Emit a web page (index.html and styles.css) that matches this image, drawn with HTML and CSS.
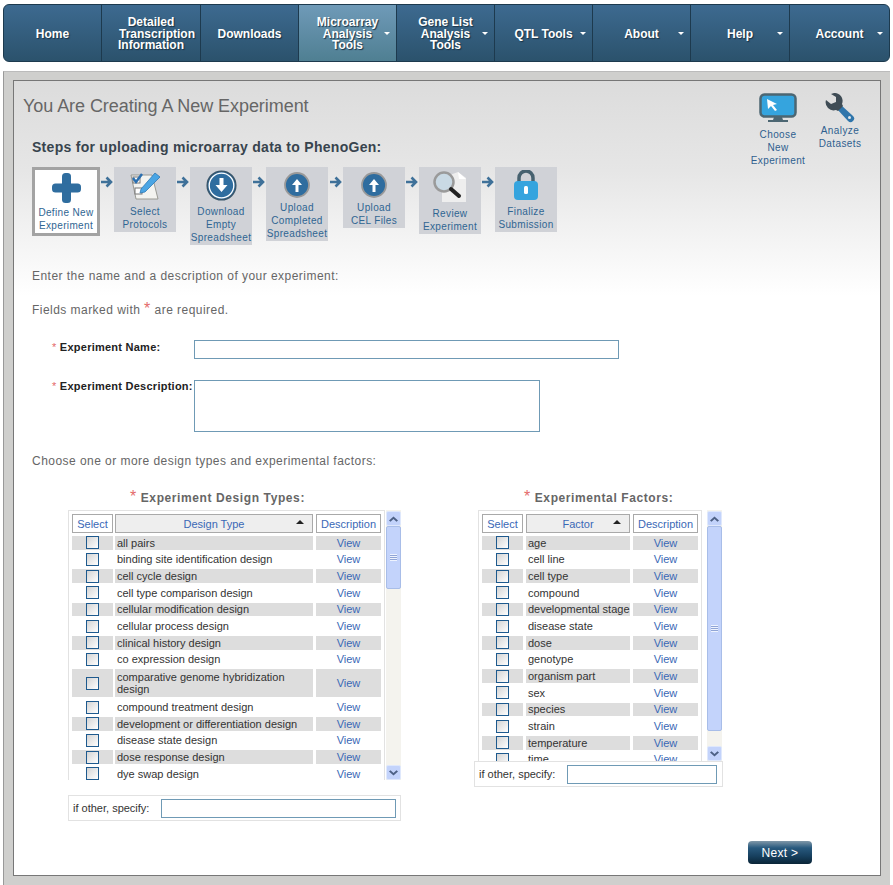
FILE: index.html
```html
<!DOCTYPE html>
<html lang="en">
<head>
  <meta charset="UTF-8" />
  <title>PhenoGen - Create Experiment</title>
  <link rel="stylesheet" href="styles.css">
</head>
<body>
  <nav class="menu">
    <a class="menu-item">Home</a>
    <a class="menu-item"><span>Detailed<br><span class="wide-line">Transcription</span><br>Information</span></a>
    <a class="menu-item">Downloads</a>
    <a class="menu-item has-sub active">Microarray<br>Analysis<br>Tools</a>
    <a class="menu-item has-sub">Gene List<br>Analysis<br>Tools</a>
    <a class="menu-item has-sub">QTL Tools</a>
    <a class="menu-item has-sub">About</a>
    <a class="menu-item has-sub">Help</a>
    <a class="menu-item has-sub">Account</a>
  </nav>

  <div class="page">
    <div class="panel">
      <div class="head">
        <div class="head-left">
          <h1>You Are Creating A New Experiment</h1>
          <h2>Steps for uploading microarray data to PhenoGen:</h2>
        </div>
        <div class="quick-links">
          <a class="quick-link choose">
            <svg width="38" height="30" viewBox="0 0 38 30">
              <rect x="1.500" y="1.500" width="35" height="22" rx="4" fill="#35a4de" stroke="#4c6672" stroke-width="2.500"/>
              <path d="M8 6l10 5-4 1 4 5-2 1-4-5-3 3z" fill="#fff"/>
              <path d="M15 24h8l1 3h5v2H9v-2h5z" fill="#4c6672"/>
            </svg>
            Choose<br>New<br>Experiment
          </a>
          <a class="quick-link analyze">
            <svg width="30" height="30" viewBox="0 0 30 30">
              <path d="M16 12l12 11a3.500 3.500 0 0 1-5 5L12 16z" fill="#2f75ab"/>
              <circle cx="24.500" cy="24.500" r="1.500" fill="#dfe6ea"/>
              <path d="M9 0a8 8 0 0 1 8 11l1 2-5 5-2-1A8 8 0 0 1 1 7l5 4 5-2 0-5-5-3z" fill="#3f4c55"/>
            </svg>
            Analyze<br>Datasets
          </a>
        </div>
      </div>

      <div class="steps">
        <div class="step current">
          <svg width="29" height="30" viewBox="0 0 29 30"><rect x="10" y="0" width="9" height="30" rx="3.500" fill="#2f6d9f"/><rect x="0" y="10.500" width="29" height="9" rx="3.500" fill="#2f6d9f"/></svg>
          <span>Define New<br>Experiment</span>
        </div>
        <svg class="step-arrow" width="12" height="12" viewBox="0 0 12 12"><path d="M0 6h9.500M5.500 1.500L10 6l-4.500 4.500" fill="none" stroke="#3f7199" stroke-width="2.600"/></svg>
        <div class="step protocols">
          <svg width="32" height="33" viewBox="0 0 32 33">
            <path d="M2 5h21l6 24H7z" fill="#f3f3f0" stroke="#9a9a94"/>
            <rect x="4" y="7" width="7" height="6" fill="#fff" stroke="#777"/>
            <rect x="6" y="18" width="7" height="6" fill="#fff" stroke="#777"/>
            <path d="M4 8l3 4 6-8" fill="none" stroke="#2a6fb0" stroke-width="2.500"/>
            <path d="M12 19L26 3l5 4-15 15-5 1z" fill="#4aa5e4" stroke="#2f78b5" stroke-width=".8"/>
          </svg>
          <span>Select<br>Protocols</span>
        </div>
        <svg class="step-arrow" width="12" height="12" viewBox="0 0 12 12"><path d="M0 6h9.500M5.500 1.500L10 6l-4.500 4.500" fill="none" stroke="#3f7199" stroke-width="2.600"/></svg>
        <div class="step">
          <svg width="31" height="31" viewBox="0 0 31 31">
            <circle cx="15.500" cy="15.500" r="14.300" fill="#2f6d9f" stroke="#39566b" stroke-width="1.500"/>
            <circle cx="15.500" cy="15.500" r="12.300" fill="none" stroke="#fff" stroke-width="1.300"/>
            <path d="M13.500 8h4v7h4l-6 7-6-7h4z" fill="#fff"/>
          </svg>
          <span>Download<br>Empty<br>Spreadsheet</span>
        </div>
        <svg class="step-arrow" width="12" height="12" viewBox="0 0 12 12"><path d="M0 6h9.500M5.500 1.500L10 6l-4.500 4.500" fill="none" stroke="#3f7199" stroke-width="2.600"/></svg>
        <div class="step upload">
          <svg width="26" height="26" viewBox="0 0 26 26">
            <circle cx="13" cy="13" r="12" fill="#2f6d9f" stroke="#999" stroke-width="1.800"/>
            <path d="M11.500 20v-7H8l5-6 5 6h-3.500v7z" fill="#fff"/>
          </svg>
          <span>Upload<br>Completed<br>Spreadsheet</span>
        </div>
        <svg class="step-arrow wider" width="12" height="12" viewBox="0 0 12 12"><path d="M0 6h9.500M5.500 1.500L10 6l-4.500 4.500" fill="none" stroke="#3f7199" stroke-width="2.600"/></svg>
        <div class="step upload">
          <svg width="26" height="26" viewBox="0 0 26 26">
            <circle cx="13" cy="13" r="12" fill="#2f6d9f" stroke="#999" stroke-width="1.800"/>
            <path d="M11.500 20v-7H8l5-6 5 6h-3.500v7z" fill="#fff"/>
          </svg>
          <span>Upload<br>CEL Files</span>
        </div>
        <svg class="step-arrow" width="12" height="12" viewBox="0 0 12 12"><path d="M0 6h9.500M5.500 1.500L10 6l-4.500 4.500" fill="none" stroke="#3f7199" stroke-width="2.600"/></svg>
        <div class="step review">
          <svg width="36" height="34" viewBox="0 0 36 34">
            <path d="M10 8l16-6 8 6v24H10z" fill="#eeeeee"/>
            <path d="M26 2l1 7h7z" fill="#fff"/>
            <circle cx="12" cy="12" r="9.500" fill="#c9d9e4" stroke="#9a9a9a" stroke-width="2.500"/>
            <path d="M19 19l8 7" stroke="#222" stroke-width="4" stroke-linecap="round"/>
          </svg>
          <span>Review<br>Experiment</span>
        </div>
        <svg class="step-arrow" width="12" height="12" viewBox="0 0 12 12"><path d="M0 6h9.500M5.500 1.500L10 6l-4.500 4.500" fill="none" stroke="#3f7199" stroke-width="2.600"/></svg>
        <div class="step lock">
          <svg width="26" height="31" viewBox="0 0 26 31">
            <path d="M6 13V8a7 7 0 0 1 14 0v5" fill="none" stroke="#46616f" stroke-width="3.500"/>
            <rect x="1" y="11" width="24" height="19" rx="4" fill="#35a4de"/>
            <rect x="11" y="16" width="4" height="8" rx="1.500" fill="#fff"/>
          </svg>
          <span>Finalize<br>Submission</span>
        </div>
      </div>

      <p class="intro first">Enter the name and a description of your experiment:</p>
      <p class="intro required-note">Fields marked with <span class="star big">*</span> are required.</p>

      <div class="field name-field">
        <label class="field-label"><span class="star">*</span> Experiment Name:</label>
        <input class="text-input name-input" type="text">
      </div>
      <div class="field desc-field">
        <label class="field-label"><span class="star">*</span> Experiment Description:</label>
        <textarea class="text-input desc-input"></textarea>
      </div>

      <p class="intro choose-note">Choose one or more design types and experimental factors:</p>

      <div class="lists">
        <section class="list-col design-col">
          <h3><span class="star big">*</span> Experiment Design Types:</h3>
          <div class="list-wrap">
            <div class="list-box">
              <div class="row head-row">
                <div class="c-sel th">Select</div>
                <div class="c-name th sorted">Design Type<i class="sort-arrow"></i></div>
                <div class="c-view th">Description</div>
              </div>
              <div class="row odd"><div class="c-sel"><i class="check"></i></div><div class="c-name">all pairs</div><div class="c-view">View</div></div>
              <div class="row"><div class="c-sel"><i class="check"></i></div><div class="c-name">binding site identification design</div><div class="c-view">View</div></div>
              <div class="row odd"><div class="c-sel"><i class="check"></i></div><div class="c-name">cell cycle design</div><div class="c-view">View</div></div>
              <div class="row"><div class="c-sel"><i class="check"></i></div><div class="c-name">cell type comparison design</div><div class="c-view">View</div></div>
              <div class="row odd"><div class="c-sel"><i class="check"></i></div><div class="c-name">cellular modification design</div><div class="c-view">View</div></div>
              <div class="row"><div class="c-sel"><i class="check"></i></div><div class="c-name">cellular process design</div><div class="c-view">View</div></div>
              <div class="row odd"><div class="c-sel"><i class="check"></i></div><div class="c-name">clinical history design</div><div class="c-view">View</div></div>
              <div class="row"><div class="c-sel"><i class="check"></i></div><div class="c-name">co expression design</div><div class="c-view">View</div></div>
              <div class="row odd tall"><div class="c-sel"><i class="check"></i></div><div class="c-name">comparative genome hybridization design</div><div class="c-view">View</div></div>
              <div class="row"><div class="c-sel"><i class="check"></i></div><div class="c-name">compound treatment design</div><div class="c-view">View</div></div>
              <div class="row odd"><div class="c-sel"><i class="check"></i></div><div class="c-name">development or differentiation design</div><div class="c-view">View</div></div>
              <div class="row"><div class="c-sel"><i class="check"></i></div><div class="c-name">disease state design</div><div class="c-view">View</div></div>
              <div class="row odd"><div class="c-sel"><i class="check"></i></div><div class="c-name">dose response design</div><div class="c-view">View</div></div>
              <div class="row"><div class="c-sel"><i class="check"></i></div><div class="c-name">dye swap design</div><div class="c-view">View</div></div>
            </div>
            <div class="scrollbar">
              <div class="sb-btn up"><svg width="9" height="6" viewBox="0 0 9 6"><path d="M0 4.500l4.500-4 4.500 4-1.500 1.200-3-2.600-3 2.600z" fill="#4d6185"/></svg></div>
              <div class="sb-thumb"><i></i></div>
              <div class="sb-track"></div>
              <div class="sb-btn down"><svg width="9" height="6" viewBox="0 0 9 6"><path d="M0 1.500l4.500 4 4.500-4L7.500.3l-3 2.600-3-2.600z" fill="#4d6185"/></svg></div>
            </div>
          </div>
          <div class="other-box">
            <label>if other, specify:</label>
            <input class="text-input other-input" type="text">
          </div>
        </section>

        <section class="list-col factor-col">
          <h3><span class="star big">*</span> Experimental Factors:</h3>
          <div class="list-wrap">
            <div class="list-box">
              <div class="row head-row">
                <div class="c-sel th">Select</div>
                <div class="c-name th sorted">Factor<i class="sort-arrow"></i></div>
                <div class="c-view th">Description</div>
              </div>
              <div class="row odd"><div class="c-sel"><i class="check"></i></div><div class="c-name">age</div><div class="c-view">View</div></div>
              <div class="row"><div class="c-sel"><i class="check"></i></div><div class="c-name">cell line</div><div class="c-view">View</div></div>
              <div class="row odd"><div class="c-sel"><i class="check"></i></div><div class="c-name">cell type</div><div class="c-view">View</div></div>
              <div class="row"><div class="c-sel"><i class="check"></i></div><div class="c-name">compound</div><div class="c-view">View</div></div>
              <div class="row odd"><div class="c-sel"><i class="check"></i></div><div class="c-name">developmental stage</div><div class="c-view">View</div></div>
              <div class="row"><div class="c-sel"><i class="check"></i></div><div class="c-name">disease state</div><div class="c-view">View</div></div>
              <div class="row odd"><div class="c-sel"><i class="check"></i></div><div class="c-name">dose</div><div class="c-view">View</div></div>
              <div class="row"><div class="c-sel"><i class="check"></i></div><div class="c-name">genotype</div><div class="c-view">View</div></div>
              <div class="row odd"><div class="c-sel"><i class="check"></i></div><div class="c-name">organism part</div><div class="c-view">View</div></div>
              <div class="row"><div class="c-sel"><i class="check"></i></div><div class="c-name">sex</div><div class="c-view">View</div></div>
              <div class="row odd"><div class="c-sel"><i class="check"></i></div><div class="c-name">species</div><div class="c-view">View</div></div>
              <div class="row"><div class="c-sel"><i class="check"></i></div><div class="c-name">strain</div><div class="c-view">View</div></div>
              <div class="row odd"><div class="c-sel"><i class="check"></i></div><div class="c-name">temperature</div><div class="c-view">View</div></div>
              <div class="row"><div class="c-sel"><i class="check"></i></div><div class="c-name">time</div><div class="c-view">View</div></div>
            </div>
            <div class="scrollbar">
              <div class="sb-btn up"><svg width="9" height="6" viewBox="0 0 9 6"><path d="M0 4.500l4.500-4 4.500 4-1.500 1.200-3-2.600-3 2.600z" fill="#4d6185"/></svg></div>
              <div class="sb-thumb"><i></i></div>
              <div class="sb-track"></div>
              <div class="sb-btn down"><svg width="9" height="6" viewBox="0 0 9 6"><path d="M0 1.500l4.500 4 4.500-4L7.500.3l-3 2.600-3-2.600z" fill="#4d6185"/></svg></div>
            </div>
          </div>
          <div class="other-box">
            <label>if other, specify:</label>
            <input class="text-input other-input" type="text">
          </div>
        </section>
      </div>

      <div class="actions">
        <button class="next-btn">Next &gt;</button>
      </div>
    </div>
  </div>
</body>
</html>
```

FILE: styles.css
```css
html, body {
  margin: 0;
  padding: 0;
  height: 885px;
  overflow: hidden;
  background: #fff;
  font-family: "Liberation Sans", Arial, sans-serif;
  color: #333;
}

/* top menu */
.menu {
  display: flex;
  height: 58px;
  margin: 4px 3px 0 3px;
  background: linear-gradient(#3d6a90, #2b526c);
  border: 1px solid #1d3a4e;
  border-radius: 6px;
  box-sizing: border-box;
  overflow: hidden;
}

.menu-item {
  position: relative;
  flex: 0 0 98px;
  box-sizing: border-box;
  display: flex;
  align-items: center;
  justify-content: center;
  text-align: center;
  color: #fff;
  font-size: 12px;
  font-weight: bold;
  line-height: 11.500px;
  padding-top: 3px;
  border-right: 1px solid #1d3a4e;
  text-shadow: 1px 1px 1px #1b3346;
}

.menu-item:nth-child(2) { flex-basis: 99px; }
.menu-item:nth-child(8) { flex-basis: 99px; }
.menu-item:last-child { flex: 1; border-right: none; }

.wide-line {
  display: inline-block;
  padding-left: 12px;
}

.menu-item.active {
  background: linear-gradient(#6f9ab8, #4f7f92);
}

.has-sub::after {
  content: "";
  position: absolute;
  right: 6px;
  top: 27px;
  border-left: 3.500px solid transparent;
  border-right: 3.500px solid transparent;
  border-top: 3px solid #fff;
}

/* content frame */
.page {
  margin: 9px 3px 0 3px;
  height: 820px;
  box-sizing: border-box;
  background: #cfcfcd;
  border-left: 1px solid #999;
  border-top: 1px solid #bbb;
  padding: 8px 9px 0 9px;
}

.panel {
  height: 796px;
  box-sizing: border-box;
  border: 1px solid #777;
  background: linear-gradient(#dcdcdc 0, #e6e6e6 90px, #fff 215px);
  padding: 0 0 0 9px;
}

.head {
  display: flex;
  justify-content: space-between;
  height: 86px;
}

h1 {
  margin: 14px 0 0 0;
  font-size: 18px;
  line-height: 22px;
  font-weight: normal;
  letter-spacing: -.06px;
  color: #666;
}

h2 {
  margin: 21px 0 0 9px;
  font-size: 14px;
  line-height: 18px;
  letter-spacing: .28px;
  color: #38444e;
}

.quick-links {
  display: flex;
  align-items: flex-start;
  gap: 9px;
  margin-right: 17px;
  padding-top: 12px;
}

.quick-link {
  display: flex;
  flex-direction: column;
  align-items: center;
  text-align: center;
  font-size: 10px;
  line-height: 13px;
  letter-spacing: .4px;
  color: #2f5f8f;
}

.quick-link svg { margin-bottom: 5px; }
.quick-link.choose { width: 60px; }
.quick-link.analyze { width: 46px; }
.quick-link.analyze svg { margin: 0 0 1px 0; }

/* steps */
.steps {
  display: flex;
  align-items: flex-start;
  margin-left: 9px;
}

.step {
  flex: 0 0 62px;
  display: flex;
  flex-direction: column;
  align-items: center;
  box-sizing: border-box;
  background: #d0d2d7;
  text-align: center;
  color: #2f6592;
  font-size: 10px;
  line-height: 13px;
  letter-spacing: .35px;
  padding: 3px 0 1px 0;
  white-space: nowrap;
}

.step span { display: block; margin-top: 4px; }

.step-arrow {
  flex: 0 0 12px;
  margin: 9px 1px 0 1px;
}

.step-arrow.wider { margin-left: 2px; }

.step.current {
  flex-basis: 68px;
  background: #fff;
  border: 3px solid #a3a3a3;
  padding: 3px 0 1px 0;
}

.step.current span { margin-top: 3px; }
.step.protocols span { margin-top: 2px; }
.step.upload { padding-top: 5px; }
.step.upload span { margin-top: 3px; }
.step.review span { margin-top: 3px; }
.step.lock { padding-top: 3px; }

/* intro text and form */
.intro {
  margin: 0 0 0 9px;
  font-size: 12px;
  line-height: 15px;
  letter-spacing: .46px;
  color: #666;
}

.intro.first { margin-top: 24px; }
.intro.required-note { margin-top: 19px; }
.intro.choose-note { margin-top: 22px; }

.star { color: #e46a6a; font-weight: normal; }
.star.big { font-size: 16px; line-height: 12px; }

.field {
  display: flex;
  align-items: flex-start;
}

.field-label {
  flex: 0 0 142px;
  margin-left: 29px;
  box-sizing: border-box;
  font-size: 11px;
  line-height: 14px;
  font-weight: bold;
  letter-spacing: .25px;
  color: #222;
  white-space: nowrap;
}

.name-field { margin-top: 22px; }
.desc-field { margin-top: 21px; }
.desc-field .field-label { margin-top: -1px; }

.text-input {
  box-sizing: border-box;
  border: 1px solid #6f9ab5;
  background: #fff;
  padding: 0;
  margin: 0;
  display: block;
  border-radius: 0;
  outline: none;
  resize: none;
}

.name-input { width: 425px; height: 19px; }
.desc-input { width: 346px; height: 52px; }

/* design type and factor lists */
.lists {
  display: flex;
  align-items: flex-start;
  margin: 21px 0 0 45px;
}

.list-col h3 {
  margin: 0;
  font-size: 12px;
  line-height: 16px;
  letter-spacing: .6px;
  color: #666;
  white-space: nowrap;
}

.design-col { width: 333px; margin-right: 73px; }
.factor-col { width: 249px; }
.design-col h3 { padding-left: 62px; }
.factor-col h3 { padding-left: 50px; }

.list-wrap {
  display: flex;
  align-items: flex-start;
  height: 270px;
  margin-top: 4px;
}

.factor-col .list-wrap {
  height: 251px;
  margin-left: 4px;
}

.list-box {
  box-sizing: border-box;
  width: 318px;
  height: 100%;
  overflow: hidden;
  background: #fff;
  border: 1px solid #e2e2e2;
  border-bottom: none;
  padding: 3px 3px 0 3px;
  display: flex;
  flex-direction: column;
  gap: 3px;
}

.factor-col .list-box { width: 224px; }

.row {
  display: flex;
  gap: 2px;
  flex: 0 0 auto;
  min-height: 13.670px;
  font-size: 11px;
  line-height: 12px;
}

.row.tall { min-height: 28px; }

.c-sel {
  flex: 0 0 41px;
  display: flex;
  justify-content: center;
  align-items: center;
}

.c-name {
  flex: 1;
  display: flex;
  align-items: center;
  padding: 0 3px 0 2px;
  color: #333;
}

.factor-col .c-name {
  margin-left: 1px;
  padding-right: 0;
  white-space: nowrap;
}

.c-view {
  flex: 0 0 65px;
  margin-left: 1px;
  text-align: center;
  color: #3a68b6;
  display: flex;
  align-items: center;
  justify-content: center;
}

.row.odd .c-sel, .row.odd .c-name, .row.odd .c-view {
  background: #dddddd;
}

.head-row { min-height: 19px; }

.th {
  box-sizing: border-box;
  border: 1px solid #a9a9a9;
  background: #fff;
  color: #3a68b6;
  text-align: center;
  display: flex;
  align-items: center;
  justify-content: center;
  padding: 0;
}

.th.sorted {
  position: relative;
  background: #eeeeee;
}

.factor-col .th { padding: 0; }

.sort-arrow {
  position: absolute;
  right: 8px;
  top: 5px;
  border-left: 4px solid transparent;
  border-right: 4px solid transparent;
  border-bottom: 4px solid #222;
}

.check {
  display: block;
  box-sizing: border-box;
  width: 13px;
  height: 13px;
  border: 1px solid #1e5a8e;
  background: linear-gradient(135deg, #d4d4d4, #ffffff);
}

/* scroll bar drawn to match the old xp look */
.scrollbar {
  flex: 0 0 15px;
  margin-left: 1px;
  height: 100%;
  display: flex;
  flex-direction: column;
  background: #f4f3ee;
  box-sizing: border-box;
  padding-top: 1px;
}

.factor-col .scrollbar { margin-left: 5px; }

.sb-btn {
  flex: 0 0 15px;
  box-sizing: border-box;
  display: flex;
  align-items: center;
  justify-content: center;
  background: #c3d3fb;
  border: 1px solid #dfe8fc;
  border-radius: 2px;
}

.sb-thumb {
  flex: 0 0 63px;
  box-sizing: border-box;
  background: #c3d3fb;
  border: 1px solid #a8bde8;
  border-radius: 2px;
  display: flex;
  align-items: center;
  justify-content: center;
}

.factor-col .sb-thumb { flex-basis: 205px; }

.sb-thumb i {
  display: block;
  width: 7px;
  height: 7px;
  background: repeating-linear-gradient(#eef3fe 0 1px, #90a5d6 1px 2px);
}

.sb-track { flex: 1; }

.other-box {
  display: flex;
  align-items: center;
  box-sizing: border-box;
  height: 26px;
  background: #fff;
  border: 1px solid #e2e2e2;
  padding: 0 4px 0 4px;
  margin-top: 15px;
  font-size: 11px;
  color: #333;
}

.factor-col .other-box { margin-top: 0; padding-right: 5px; }

.other-box label { flex: 1; }
.other-input { height: 19px; width: 235px; }
.factor-col .other-input { width: 150px; }

/* next button */
.actions {
  display: flex;
  justify-content: flex-end;
}

.next-btn {
  width: 64px;
  height: 23px;
  margin: 20px 68px 0 0;
  border: none;
  border-radius: 4px;
  padding: 0;
  background: linear-gradient(#7f97a8 0, #28597e 30%, #17405f 65%, #0a2537 100%);
  color: #fff;
  font-family: "Liberation Sans", Arial, sans-serif;
  font-size: 12px;
  letter-spacing: .3px;
}
```
